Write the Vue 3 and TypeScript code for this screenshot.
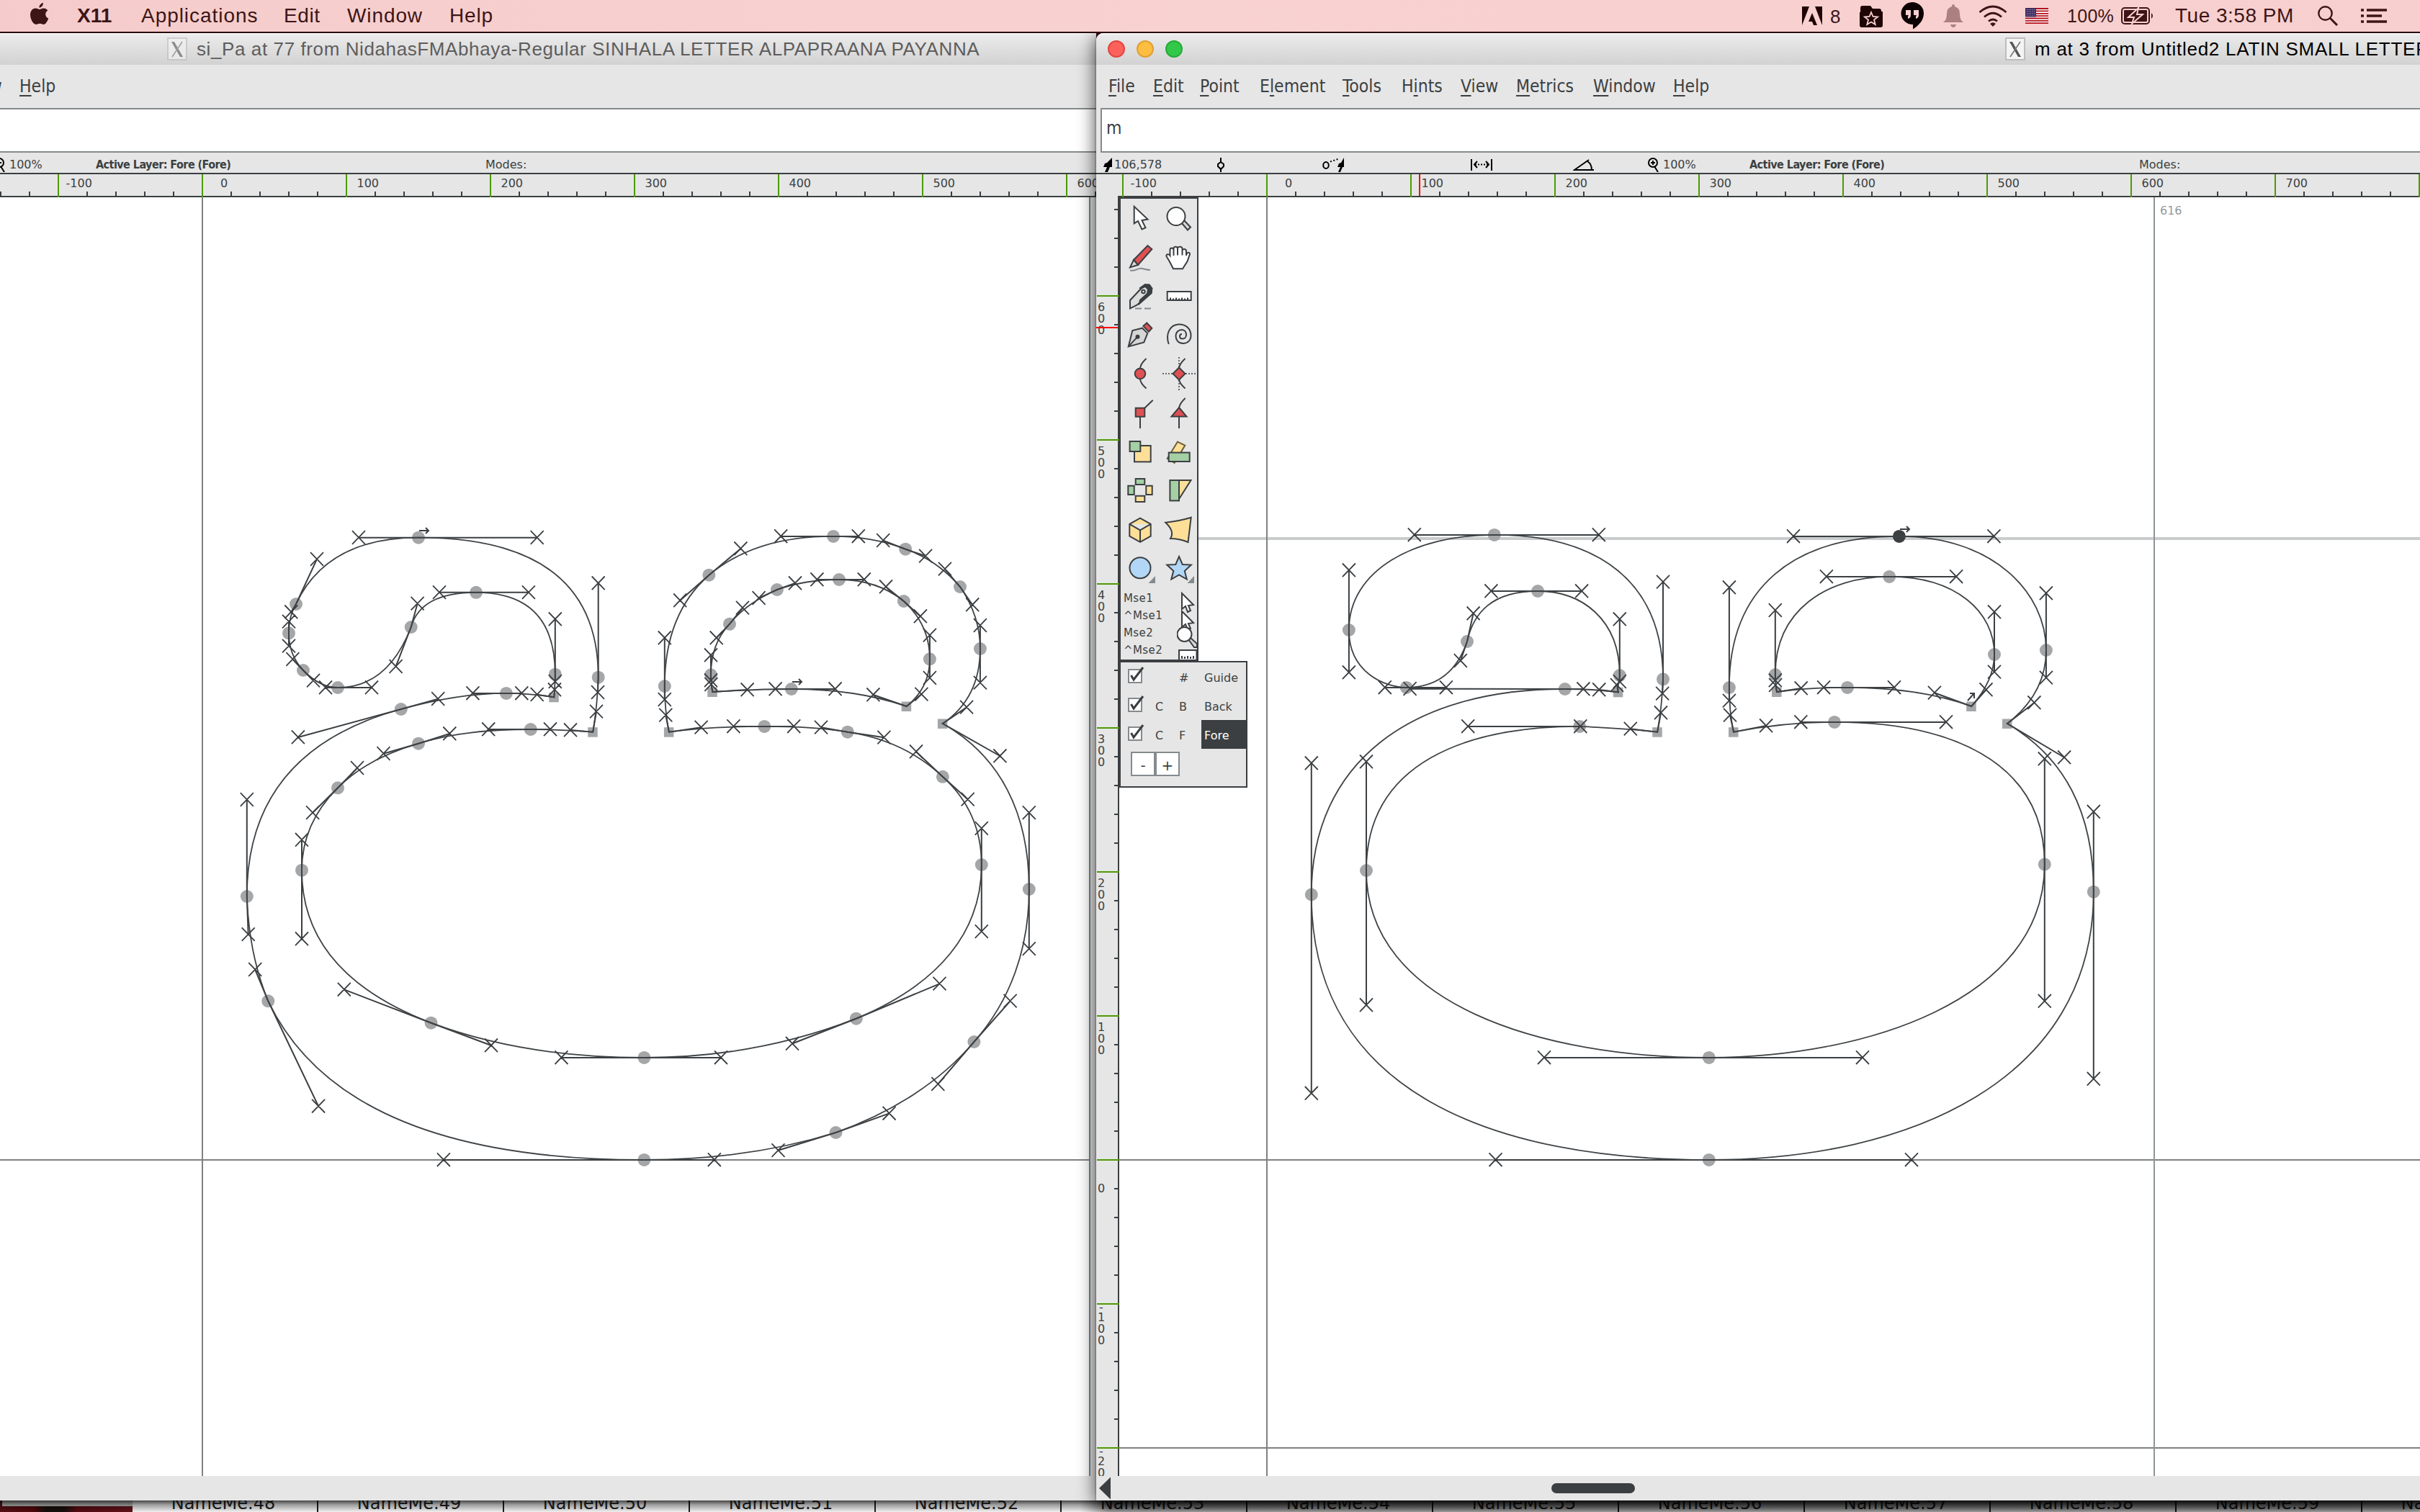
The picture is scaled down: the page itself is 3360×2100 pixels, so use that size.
<script setup lang="ts">
type Kind = 'c' | 's' | 'sel'
// x, y, incoming handle, outgoing handle, kind
type Pt = [number, number, number, number, number, number, Kind]

const bodyA: Pt[] = [
  [581, 746.7, 498, 746.7, 745.7, 746.7, 'c'],
  [830.7, 940.7, 830.7, 810, 830, 961.7, 'c'],
  [823.2, 1016.7, 828, 988.3, 792, 1014, 's'],
  [736.8, 1013, 764, 1013, 678.2, 1013, 'c'],
  [581, 1032.7, 624.3, 1019, 532.5, 1046.7, 'c'],
  [469, 1094.3, 496, 1066.7, 434.1, 1128.8, 'c'],
  [419, 1208.7, 419, 1166.5, 419, 1304, 'c'],
  [598.5, 1420.7, 477.8, 1374.4, 682, 1452, 'c'],
  [894.4, 1468.9, 779.5, 1468.9, 1001, 1468.9, 'c'],
  [1188.8, 1414.7, 1100, 1449.5, 1304.5, 1366.3, 'c'],
  [1362.8, 1201, 1362.8, 1293.8, 1362.8, 1150.6, 'c'],
  [1308.9, 1078.8, 1343.7, 1110.3, 1272, 1044, 'c'],
  [1176.8, 1016.7, 1227.4, 1024.3, 1140, 1010.3, 'c'],
  [1061.3, 1008.9, 1102.2, 1008.9, 1018.4, 1008.9, 'c'],
  [928.9, 1016.7, 973.6, 1010.3, 924.3, 993.3, 's'],
  [922.8, 953, 922.8, 971.7, 922.8, 886, 'c'],
  [984.4, 798.7, 944.2, 834, 1028.4, 762, 'c'],
  [1157, 744.9, 1084.2, 744.9, 1191.8, 744.9, 'c'],
  [1257.2, 762.7, 1226.2, 750.7, 1285.1, 772.3, 'c'],
  [1333, 815, 1311.9, 790.3, 1350.2, 840, 'c'],
  [1360.9, 901, 1360.9, 868.7, 1360.9, 948.3, 'c'],
  [1308.9, 1005, 1342.1, 982.3, 1388.4, 1050, 's'],
  [1428.8, 1235, 1428.8, 1128.8, 1428.8, 1317.8, 'c'],
  [1352.4, 1447, 1402.6, 1390.3, 1302.3, 1505.7, 'c'],
  [1160.5, 1573, 1234.6, 1546.4, 1080.5, 1597.8, 'c'],
  [894.4, 1610.9, 991.8, 1610.9, 615.9, 1610.9, 'c'],
  [372.3, 1390.3, 442.1, 1536.4, 354.2, 1346.7, 'c'],
  [342.8, 1245, 344.7, 1297.8, 342.8, 1110.7, 'c'],
  [556.8, 985, 413.9, 1024, 608.2, 970.7, 'c'],
  [702.9, 962.9, 656.4, 962.9, 724.3, 962.9, 'c'],
  [769.3, 968.3, 745.7, 964.7, 770, 958, 's'],
  [770.8, 936.7, 770.8, 946.7, 770.8, 860, 'c'],
  [661, 822.8, 733.9, 822.8, 610, 822.8, 'c'],
  [570.7, 871, 579.6, 838.3, 549.6, 925.7, 'c'],
  [469, 955, 516, 955, 452, 955, 'c'],
  [421, 931, 435, 945.3, 406.4, 915.7, 'c'],
  [401, 879.3, 401, 897.3, 401, 863.3, 'c'],
  [411, 839, 404.3, 850, 440, 776.7, 'c'],
]
const counterA: Pt[] = [
  [1098.8, 957, 1076.6, 957, 1159.6, 957, 'c'],
  [1258.7, 981, 1212.4, 965, 1279.4, 964.3, 's'],
  [1290.9, 915.3, 1290.9, 941.7, 1290.9, 882.3, 'c'],
  [1254.9, 835, 1277.9, 856, 1230, 815, 'c'],
  [1165, 805, 1199.8, 805, 1134.4, 805, 'c'],
  [1078.9, 819, 1104, 810, 1053.6, 830.7, 'c'],
  [1013, 866.7, 1031, 844.3, 994.7, 886, 'c'],
  [987, 937.3, 987, 910, 987, 945, 'c'],
  [989.3, 961, 987.4, 950.7, 1037.6, 958, 's'],
]
const bodyB: Pt[] = [
  [2074.8, 742.9, 1963.8, 742.9, 2219.8, 742.9, 'c'],
  [2309, 943.3, 2309, 808.3, 2308.2, 963.3, 'c'],
  [2301.2, 1016.7, 2306, 990, 2263.8, 1012.3, 's'],
  [2193.2, 1008.9, 2194.3, 1008.9, 2038.2, 1008.9, 'c'],
  [1897, 1209, 1897, 1058, 1897, 1396, 'c'],
  [2372.8, 1468.9, 2144, 1468.9, 2586, 1468.9, 'c'],
  [2838.8, 1200.5, 2838.8, 1390.5, 2838.8, 1054, 'c'],
  [2547, 1002.9, 2702, 1002.9, 2500.3, 1002.9, 'c'],
  [2407, 1016.7, 2452.1, 1008, 2402, 993.3, 's'],
  [2400.9, 955, 2400.9, 973.3, 2400.9, 816, 'c'],
  [2636.9, 744.9, 2490, 744.9, 2768.4, 744.9, 'sel'],
  [2840.9, 903, 2840.9, 824, 2840.9, 941.3, 'c'],
  [2787, 1005, 2824.4, 976, 2866.1, 1052, 's'],
  [2906.8, 1238.7, 2906.8, 1127.5, 2906.8, 1498.5, 'c'],
  [2372.8, 1610.9, 2654, 1610.9, 2076.5, 1610.9, 'c'],
  [1820.8, 1242.5, 1820.8, 1518.5, 1820.8, 1060, 'c'],
  [2172.8, 957, 1957.6, 956.7, 2198.4, 957, 'c'],
  [2246.8, 961.3, 2220.2, 958, 2245, 951.7, 's'],
  [2248.8, 938, 2248.8, 946.7, 2248.8, 860, 'c'],
  [2135.1, 821, 2196.1, 821, 2070.4, 821, 'c'],
  [2037, 891, 2045.6, 852, 2027.8, 917.7, 'c'],
  [1952.7, 954.9, 2007.9, 954.9, 1922.8, 954.9, 'c'],
  [1872.9, 875, 1872.9, 934, 1872.9, 792, 'c'],
]
const counterB: Pt[] = [
  [2737.2, 981, 2685.9, 962.3, 2757.5, 958, 's'],
  [2769, 909, 2769, 933.3, 2769, 850, 'c'],
  [2623.2, 800.9, 2716.1, 800.9, 2535.9, 800.9, 'c'],
  [2464.8, 937, 2464.8, 847.7, 2464.8, 945, 'c'],
  [2467, 961, 2465.1, 951.7, 2500.7, 956, 's'],
  [2565, 954.9, 2532.1, 954.9, 2630, 954.9, 'c'],
]

const outline = (pts: Pt[]): string => {
  let d = `M${pts[0][0]} ${pts[0][1]}`
  pts.forEach((p, i) => {
    const n = pts[(i + 1) % pts.length]
    d += `C${p[4]} ${p[5]} ${n[2]} ${n[3]} ${n[0]} ${n[1]}`
  })
  return d + 'Z'
}
const handles = (pts: Pt[]): string =>
  pts.map((p) => `M${p[2]} ${p[3]}L${p[0]} ${p[1]}L${p[4]} ${p[5]}`).join('')
const cross = (x: number, y: number): string =>
  `M${x - 9} ${y - 9.5}l18 18.6M${x + 9} ${y - 9.5}l-18 18.6`
const crosses = (pts: Pt[]): string =>
  pts.map((p) => cross(p[2], p[3]) + cross(p[4], p[5])).join('')

const menus = [
  { pre: '', key: 'F', post: 'ile', w: 62 },
  { pre: '', key: 'E', post: 'dit', w: 65 },
  { pre: '', key: 'P', post: 'oint', w: 83 },
  { pre: 'E', key: 'l', post: 'ement', w: 115 },
  { pre: '', key: 'T', post: 'ools', w: 82 },
  { pre: 'H', key: 'i', post: 'nts', w: 82 },
  { pre: '', key: 'V', post: 'iew', w: 77 },
  { pre: '', key: 'M', post: 'etrics', w: 107 },
  { pre: '', key: 'W', post: 'indow', w: 111 },
  { pre: '', key: 'H', post: 'elp', w: 80 },
]

interface Win {
  id: string
  title: string
  entry: string
  coords: string
  left: number
  zero: number
  canvasX: number
  canvasW: number
  contours: Pt[][]
  arrows: string[]
}
const windows: Win[] = [
  {
    id: 'back', title: 'si_Pa at 77 from NidahasFMAbhaya-Regular SINHALA LETTER ALPAPRAANA PAYANNA',
    entry: '', coords: '', left: -774, zero: 281, canvasX: -742, canvasW: 2254,
    contours: [bodyA, counterA],
    arrows: ['M582 737h13m-4-4l4 4l-4 4', 'M1100 947h13m-4-4l4 4l-4 4'],
  },
  {
    id: 'front', title: 'm at 3 from Untitled2 LATIN SMALL LETTER M',
    entry: 'm', coords: '106,578', left: 1522, zero: 1759, canvasX: 1554, canvasW: 1806,
    contours: [bodyB, counterB],
    arrows: ['M2638 735h13m-4-4l4 4l-4 4', 'M2732 973l9-10m-6 0h6v7'],
  },
]

const units = [-1, 0, 1, 2, 3, 4, 5, 6, 7, 8]
const labelX = (zero: number, u: number): number => zero + u * 200 + (u < 0 ? 10.5 : u === 0 ? 25 : 14.5)
const minors = (from: number, to: number, origin: number): number[] => {
  const out: number[] = []
  for (let i = -60; i < 80; i++) {
    const v = origin + i * 40
    if (i % 5 !== 0 && v > from && v < to) out.push(v)
  }
  return out
}
const vUnits = [6, 5, 4, 3, 2, 1, 0, -1, -2]
const vDigits = (u: number): { ch: string; y: number }[] => {
  const y = 1611 - u * 200
  if (u === 0) return [{ ch: '0', y: y + 45 }]
  const txt = String(Math.abs(u) * 100).split('')
  const off = u < 0 ? 24 : 21
  const digits = txt.map((ch, i) => ({ ch, y: y + off + i * 16 }))
  return u < 0 ? [{ ch: '-', y: y + 10 }, ...digits] : digits
}

const layers = [
  { c: '', k: '#', name: 'Guide' },
  { c: 'C', k: 'B', name: 'Back' },
  { c: 'C', k: 'F', name: 'Fore' },
]
const mouse = ['Mse1', '^Mse1', 'Mse2', '^Mse2']
const names = Array.from({ length: 13 }, (_, i) => `NameMe.${48 + i}`)
</script>

<template>
  <div class="desktop">
    <div class="fontview">
      <div class="wall"><i></i></div>
      <div v-for="n in names" :key="n" class="cell"><span>{{ n }}</span></div>
      <div class="shade"></div>
      <div class="shade deep"></div>
    </div>

    <section v-for="w in windows" :key="w.id" class="win" :class="w.id" :style="{ left: w.left + 'px' }">
      <header class="title">
        <div v-if="w.id === 'front'" class="lights"><i class="r"></i><i class="y"></i><i class="g"></i></div>
        <svg class="xicon" width="28" height="32" viewBox="0 0 28 32">
          <rect x="1" y="1" width="26" height="30" fill="#f4f4f4" stroke="#bdbdbd" stroke-width="2" />
          <path d="M6 6h4l12 21h-4z" fill="#555" />
          <path d="M21 6L7 27" stroke="#777" stroke-width="1.6" />
        </svg>
        <span class="ttext">{{ w.title }}</span>
      </header>
      <nav class="menu">
        <span v-for="(m, i) in menus" :key="i" :style="{ width: m.w + 'px' }">{{ m.pre }}<u>{{ m.key }}</u>{{ m.post }}</span>
      </nav>
      <div class="entry">{{ w.entry }}</div>
      <div class="info">
        <div class="seg s1">
          <svg width="14" height="20" viewBox="0 0 14 20"><path d="M13 0v13h-3L7 20H3l3-7H1l2-5 3-1z" fill="#000" /></svg>
          <span>{{ w.coords }}</span>
        </div>
        <div class="seg s2">
          <svg width="18" height="20" viewBox="0 0 18 20"><path d="M9 0v6M9 15v5M9 6l4 3v3l-4 4-4-4V9z" fill="none" stroke="#000" stroke-width="2" /></svg>
        </div>
        <div class="seg s3">
          <svg width="30" height="20" viewBox="0 0 30 20">
            <ellipse cx="5" cy="10.500" rx="3.800" ry="4.500" fill="none" stroke="#000" stroke-width="2" />
            <path d="M11 5.500l12-4" stroke="#000" stroke-width="2" stroke-dasharray="2 2.500" />
            <path d="M30 0v13h-2l-3 7h-3l3-7h-4l2-5 3-1z" fill="#000" />
          </svg>
        </div>
        <div class="seg s4">
          <svg width="30" height="20" viewBox="0 0 30 20"><path d="M1 2v16M29 2v16M9 5L5 9.500l4 4.500M21 5l4 4.500-4 4.500" fill="none" stroke="#000" stroke-width="2" /><path d="M6 9.500h18" stroke="#000" stroke-width="2" stroke-dasharray="2 2" /></svg>
        </div>
        <div class="seg s5">
          <svg width="30" height="20" viewBox="0 0 30 20"><path d="M22 3L2 17h27M20 5c5 3 6 8 6 12" fill="none" stroke="#000" stroke-width="2" /></svg>
        </div>
        <div class="seg s6">
          <svg width="16" height="20" viewBox="0 0 16 20"><circle cx="7" cy="7" r="6" fill="none" stroke="#000" stroke-width="2" /><path d="M7 4v6M4 7h6M9 12l5 8" stroke="#000" stroke-width="2" /></svg>
          <span>100%</span>
        </div>
        <div class="seg s7">Active Layer: Fore (Fore)</div>
        <div class="seg">Modes:</div>
      </div>
      <svg class="hruler" height="34" :width="w.id === 'front' ? 1838 : 2296" :viewBox="`${w.left} 240 ${w.id === 'front' ? 1838 : 2296} 34`">
        <rect :x="w.left" y="240" width="2296" height="2" fill="#3b3f42" />
        <rect :x="w.id === 'front' ? 1552 : w.left" y="272" width="2296" height="2" fill="#3b3f42" />
        <rect v-for="x in minors(w.canvasX, 3360, w.zero)" :key="x" :x="x - 1" y="266" width="2" height="6" fill="#3b3f42" />
        <g v-for="u in units" :key="u">
          <rect :x="w.zero + u * 200 - 1" y="242" width="2" height="32" fill="#4e9a06" />
          <text :x="labelX(w.zero, u)" y="260">{{ u * 100 }}</text>
        </g>
        <rect v-if="w.id === 'front'" x="1970" y="242" width="2" height="30" fill="#f00" />
      </svg>
      <div class="work">
        <svg v-if="w.id === 'front'" class="vruler" width="32" height="1776" viewBox="1522 274 32 1776">
          <rect x="1552" y="274" width="2" height="1776" fill="#3b3f42" />
          <rect v-for="y in minors(274, 2050, 1611)" :key="y" x="1547" :y="y - 1" width="5" height="2" fill="#3b3f42" />
          <g v-for="u in vUnits" :key="u">
            <rect x="1523" :y="1610 - u * 200" width="31" height="2" fill="#4e9a06" />
            <text v-for="(d, i) in vDigits(u)" :key="i" x="1529" :y="d.y" text-anchor="middle">{{ d.ch }}</text>
          </g>
          <rect x="1522" y="454" width="30" height="2" fill="#f00" />
        </svg>
        <div v-else class="vgap"></div>
        <svg class="canvas" :width="w.canvasW" height="1776" :viewBox="`${w.canvasX} 274 ${w.canvasW} 1776`">
          <rect :x="w.canvasX" y="274" :width="w.canvasW" height="1776" fill="#fff" />
          <rect v-if="w.id === 'front'" x="1554" y="746" width="1806" height="4" fill="#c9cccc" />
          <rect :x="w.canvasX" y="1610" :width="w.canvasW" height="2" fill="#808080" />
          <rect :x="w.zero - 1" y="274" width="2" height="1776" fill="#808080" />
          <template v-if="w.id === 'front'">
            <rect x="1554" y="2010" width="1806" height="2" fill="#808080" />
            <rect x="2990" y="274" width="2" height="1776" fill="#8f9496" />
            <text class="adv" x="2999" y="298">616</text>
          </template>
          <g v-for="(c, ci) in w.contours" :key="ci">
            <template v-for="(p, pi) in c" :key="pi">
              <rect v-if="p[6] === 's'" :x="p[0] - 7" :y="p[1] - 6.500" width="13.500" height="13.500" fill="#a5a6a8" />
              <circle v-else :cx="p[0]" :cy="p[1]" r="9" :fill="p[6] === 'sel' ? '#3b3f42' : '#a5a6a8'" />
            </template>
            <path :d="handles(c)" fill="none" stroke="#3b3f42" stroke-width="2" />
            <path :d="outline(c)" fill="none" stroke="#3f4346" stroke-width="1.800" />
            <path :d="crosses(c)" fill="none" stroke="#3b3f42" stroke-width="1.800" />
          </g>
          <path v-for="a in w.arrows" :key="a" :d="a" fill="none" stroke="#3b3f42" stroke-width="2" />
        </svg>
        <div v-if="w.id === 'back'" class="edge"></div>

        <aside v-if="w.id === 'front'" class="palettes">
          <div class="tools">
            <div class="grid">
              <svg viewBox="0 0 54 54"><path class="w" d="M18.700 10.800V34.400L24 31l5.500 11.500 5-2.300L29.500 30l8-1.400z" /></svg>
              <svg viewBox="0 0 54 54"><path d="M30 33l3.500-3.500 9.500 10-4 4z" fill="#d6d6d6" /><circle class="w" cx="23" cy="24.500" r="12.500" /></svg>
              <svg viewBox="0 0 54 54"><path class="r" d="M18 31L37.500 11l5.800 5L24 37.900z" /><path d="M18 31l6 6.900-11 3.500z" fill="#d6d6d6" /><path d="M13 45.500c8 2 10-4 17-2.500 4 1 7 2 11 2" fill="none" stroke="#858a8d" /></svg>
              <svg viewBox="0 0 54 54"><path class="w" d="M19 43.200L14 33.500 9.500 26c-.5-3 3-4 5-1v-8c0-3 4.500-3.500 5 0v-2c.5-3 5-3 5.500 0 .5-3 6-3 6.500 0v3c1-3 5.500-2.500 5.500 1v5c1-4 5-4 5-1l-3.500 10-6.500 10.200zM19.500 17v8M25 15v9.500M31.500 15v9.500M37 18v7" /></svg>
              <svg viewBox="0 0 54 54"><path d="M13 44.500V33L31 14l8-2.500 4 5v6L22 40z" fill="#dcdcdc" /><path d="M27 16l7-5 6 .8 3.500 5-1.500 7-16 14 1-5 10-9 1-6-4-4-6 3z" fill="#3b3f42" /><circle cx="31.500" cy="21" r="2.200" fill="#eee" /><path d="M20 44.600h9m4 0h9" stroke="#858a8d" /></svg>
              <svg viewBox="0 0 54 54"><rect class="w" x="10.700" y="21" width="33" height="12" /><path d="M15 33v-3.500M19 33v-2.500M23 33v-3.500M27 33v-2.500M31 33v-3.500M35 33v-2.500M39 33v-3.500" /></svg>
              <svg viewBox="0 0 54 54"><path d="M10.700 43.400L16.300 21 30 17.700l7.300 7.200-5 12.500z" fill="#d6d6d6" /><path class="r" d="M31.300 14.900l5-4.400 7 7.200-4.300 5z" /><path d="M10.700 43.400l12.600-13.500" /><circle cx="23.500" cy="29.800" r="2" fill="#3b3f42" /></svg>
              <svg viewBox="0 0 54 54"><path fill="none" d="M12.700 40C8 26 14 13 26.500 12.400 37 12 43.500 19 43.500 28c0 7-5 11-11 11-6.500 0-10-5-10-10 0-6 4-9 8.500-9 4 0 6 3.500 6 7 0 3-2 5.500-5 5.500s-4-1.500-4-3.500 1-3 3-3" /></svg>
              <svg viewBox="0 0 54 54"><path fill="none" d="M35.500 6Q27 14 27 20M27 34q0 6 8.500 13.500" /><circle class="r" cx="27" cy="27" r="7.300" /></svg>
              <svg viewBox="0 0 54 54"><path stroke-dasharray="2 2" stroke="#666a6c" d="M4 27h46M27 4v46" /><path fill="none" d="M35.500 6Q27 14 27 20M27 34q0 6 8.500 13.500" /><path class="r" d="M27 18.500l8.500 8.500-8.500 8.500-8.500-8.500z" /></svg>
              <svg viewBox="0 0 54 54"><path d="M33 21L44.700 9.700M27 33v16" /><rect class="r" x="20.700" y="20.700" width="12.600" height="12" /></svg>
              <svg viewBox="0 0 54 54"><path fill="none" d="M27 20q2-7 8.700-13M27 33v16" /><path class="r" d="M27 20l10.500 12.600h-21z" /></svg>
              <svg viewBox="0 0 54 54"><rect class="ye" x="19" y="19" width="22.700" height="22.400" /><rect class="gr" x="12.600" y="13" width="14.700" height="14" /></svg>
              <svg viewBox="0 0 54 54"><path d="M25 13.600l10.300 5-14.600 24.300-10-6.100z" fill="#fddf98" stroke="#6a5d3a" /><rect class="gr" x="12.700" y="28.600" width="29" height="12.400" /></svg>
              <svg viewBox="0 0 54 54"><path class="gr" d="M20.700 11h12.600v8H20.700zM10.300 20.700h8.400V33h-8.400z" /><path class="ye" d="M35.300 20.700h8.400V33h-8.400zM20.700 34.700h12.600V43H20.700z" /></svg>
              <svg viewBox="0 0 54 54"><path class="ye" d="M27 13h16.500L27 39z" /><rect class="gr" x="14.400" y="13" width="12.600" height="28.400" /></svg>
              <svg viewBox="0 0 54 54"><path class="ye" d="M27 11.600l14.700 8.300v16.700L27 44.900l-14.700-8.300V19.900zM12.300 19.900L27 28.400l14.700-8.500M27 28.400v16.500" /></svg>
              <svg viewBox="0 0 54 54"><path class="ye" d="M8.300 17.700q19-2 35.400-7L39.500 45q-12-5-24.500-5 6.500-10-6.700-22.300z" /></svg>
              <svg viewBox="0 0 54 54"><circle class="bl" cx="27" cy="26.800" r="14.500" /><path d="M48 38v10H38.500z" fill="#858a8d" stroke="none" /></svg>
              <svg viewBox="0 0 54 54"><path class="bl" d="M27 11l4.800 11 12 .6-9 8.400 3 11.500L27 36.500 16.300 42.500l3-11.500-9-8.400 12-.6z" /><path d="M48 38v10H38.500z" fill="#858a8d" stroke="none" /></svg>
            </div>
            <div class="mouse">
              <div class="mlabels"><span v-for="m in mouse" :key="m">{{ m }}</span></div>
              <svg class="micons" width="28" height="98" viewBox="1634 818 28 98">
                <path class="w" d="M1641 824v22l5-4 3 8 4-2-3-7 7-1z" />
                <path class="w" d="M1641 849v22l5-4 3 8 4-2-3-7 7-1z" />
                <path d="M1650 888l3-2 9 8v5h-4z" fill="#d6d6d6" />
                <circle class="w" cx="1644.500" cy="881" r="10" />
                <path class="w" d="M1637 903h24.500v14h-24.500zM1641 915v-4M1645 915v-3M1649 915v-4M1653 915v-3M1657 915v-4" />
              </svg>
            </div>
          </div>
          <div class="layers">
            <div v-for="l in layers" :key="l.name" class="row">
              <svg class="chk" width="24" height="26" viewBox="0 0 24 26"><rect x="1" y="5" width="18" height="18" fill="#fff" stroke="#858a8d" stroke-width="2" /><path d="M4.500 13l3.500 6L21 2" fill="none" stroke="#3b3f42" stroke-width="3" /></svg>
              <span class="c">{{ l.c }}</span><span class="k">{{ l.k }}</span>
              <span class="n" :class="{ on: l.name === 'Fore' }">{{ l.name }}</span>
            </div>
            <div class="btns"><span>-</span><span>+</span></div>
          </div>
        </aside>
      </div>
      <footer class="hbar">
        <template v-if="w.id === 'front'">
          <svg width="18" height="34" viewBox="0 0 18 34"><path d="M0 17L16 1.500v31z" fill="#3b3f42" /></svg>
          <i></i>
        </template>
      </footer>
    </section>

    <div class="macbar">
      <svg class="apple" width="28" height="34" viewBox="0 0 28 34"><path d="M19 1c.4 3-2.600 6.800-5.600 6.600C13 4.800 16 1.400 19 1zM14 10c1.300 0 3.200-1.700 5.800-1.600 2 .1 4.200 1.100 5.500 3-4.600 2.800-3.800 9.400 1 11.200C24.700 26.900 22.300 31 19.500 31c-2 0-2.700-1.200-5.200-1.200S11 31 9.200 31C5 31 1 23.500 1 17.600c0-5.700 3.700-9 7.400-9 2.400 0 4.200 1.400 5.600 1.400z" fill="currentColor" /></svg>
      <b>X11</b><span class="m2">Applications</span><span class="m3">Edit</span><span class="m4">Window</span><span class="m5">Help</span>
      <div class="status">
        <svg width="28" height="26" viewBox="0 0 28 26"><path d="M0 0h10L0 26zM18 0h10v26zM14 9l7 17h-5l-2-5h-5z" fill="#1f0406" /></svg>
        <span class="eight">8</span>
        <svg class="folder" width="32" height="30" viewBox="0 0 32 30"><path d="M4 0h11l3 4h9q3 0 3 3v1h2v19q0 3-3 3H3q-3 0-3-3V9h1V3q0-3 3-3z" fill="#1f0406" /><path d="M16 9l2.500 6 6.500.5-5 4 1.700 6.500L16 22.500 10.300 26l1.700-6.500-5-4 6.500-.5z" fill="none" stroke="#f7d0cf" stroke-width="1.800" /></svg>
        <svg class="hang" width="32" height="38" viewBox="0 0 32 38"><path d="M16 0a16 15.500 0 0 1 16 15.500C32 26 24 33 17 37.500V31A16 15.500 0 0 1 16 0z" fill="#0c0102" /><path d="M7 11h7v7q0 4-4 5v-3l1-2H7zM18 11h7v7q0 4-4 5v-3l1-2h-4z" fill="#f7d0cf" /></svg>
        <svg class="bell" width="28" height="32" viewBox="0 0 28 32"><path d="M14 0q2 0 2 3 7 2 7 10 0 9 5 12H0q5-3 5-12 0-8 7-10 0-3 2-3zM10 28h8q-1 4-4 4t-4-4z" fill="#ad8080" /></svg>
        <svg class="wifi" width="40" height="30" viewBox="0 0 40 30"><path d="M1.500 10Q20-6 38.500 10M8 16.500q12-10.500 24 0M14 22.500q6-5 12 0" fill="none" stroke="currentColor" stroke-width="2.800" /><path d="M20 30l-4-4q4-3.500 8 0z" fill="currentColor" /></svg>
        <svg class="flag" width="32" height="22" viewBox="0 0 32 22"><rect width="32" height="22" fill="#fff" /><path d="M0 1h32M0 4.400h32M0 7.800h32M0 11.200h32M0 14.500h32M0 17.900h32M0 21.200h32" stroke="#b3101c" stroke-width="1.800" /><rect width="15" height="12.500" fill="#3b2a5e" /><path d="M2 2.500h12M2 5h12M2 7.500h12M2 10h12" stroke="#c9c0dc" stroke-width="1" stroke-dasharray="1 1.600" /></svg>
        <span class="pct">100%</span>
        <svg class="batt" width="46" height="24" viewBox="0 0 46 24"><rect x="1" y="1" width="38" height="22" rx="4" fill="none" stroke="currentColor" stroke-width="2" /><rect x="4" y="4" width="32" height="16" rx="1" fill="currentColor" /><path d="M42 8q4 4 0 8z" fill="currentColor" /><path d="M24 1L10 14h8l-3 9 15-13h-8z" fill="currentColor" stroke="#f7d0cf" stroke-width="2" /></svg>
        <span class="clock">Tue 3:58 PM</span>
        <svg class="find" width="30" height="28" viewBox="0 0 30 28"><circle cx="10.500" cy="10.500" r="9.200" fill="none" stroke="currentColor" stroke-width="2.400" /><path d="M17.500 17.500L27 27" stroke="currentColor" stroke-width="3" /></svg>
        <svg class="list" width="36" height="20" viewBox="0 0 36 20"><path d="M0 2h4M8 2h28M0 10h4M8 10h21M0 18h4M8 18h28" stroke="currentColor" stroke-width="3.600" /></svg>
      </div>
    </div>
  </div>
</template>

<style>
html, body { margin: 0; overflow: hidden; }
</style>

<style scoped>
.desktop { position: relative; width: 3360px; height: 2100px; overflow: hidden; background: #3c1014; font-family: "DejaVu Sans", sans-serif; color: #3b3f42; }
.macbar { position: absolute; left: 0; top: 0; width: 3360px; height: 46px; box-sizing: border-box; border-bottom: 2px solid #2a090c; background: linear-gradient(90deg, #f5cccb, #f8d2d0 50%, #f7cfce); display: flex; align-items: center; color: #3d1517; font: 28px "Liberation Sans", Arial, sans-serif; white-space: nowrap; }
.apple { margin: -4px 0 0 41px; }
.macbar b { margin-left: 38px; width: 89px; }
.m2 { width: 198px; letter-spacing: 0.95px; }
.m3 { width: 88px; letter-spacing: 0.6px; }
.m4 { width: 142px; letter-spacing: 0.9px; }
.m5 { width: 90px; letter-spacing: 0.8px; }
.status { display: flex; align-items: center; margin-left: auto; margin-right: 46px; }
.eight { margin-left: 11px; width: 41px; padding-top: 2px; font-size: 26px; }
.folder { margin-top: 2px; }
.hang { margin-left: 25px; }
.bell { margin-left: 27px; }
.wifi { margin-left: 21px; }
.flag { margin-left: 25px; }
.pct { margin-left: 26px; width: 75px; font-size: 25px; letter-spacing: 0.3px; }
.clock { margin-left: 29px; width: 198px; letter-spacing: 0.5px; }
.list { margin-left: 30px; }

.win { position: absolute; top: 46px; height: 2038px; background: #e6e6e6; overflow: hidden; display: flex; flex-direction: column; }
.win > * { flex: none; }
.back { width: 2296px; }
.front { width: 1838px; border-radius: 10px 0 0 0; overflow: visible; box-shadow: -1px 0 2px rgba(0,0,0,.25), 0 4px 26px rgba(0,0,0,.75); }
.title { height: 44px; box-sizing: border-box; display: flex; align-items: center; overflow: hidden; background: linear-gradient(#ececec, #d2d2d2); box-shadow: inset 0 2px #f6f6f6; font: 26px "Liberation Sans", Arial, sans-serif; white-space: nowrap; border-radius: 10px 0 0 0; }
.lights { flex: none; display: flex; gap: 16px; margin-left: 16px; width: 104px; margin-right: 1142px; }
.lights i { flex: none; width: 24px; height: 24px; box-sizing: border-box; border-radius: 50%; border: 2px solid; }
.lights .r { background: #fd615c; border-color: #e2463f; }
.lights .y { background: #fdbd40; border-color: #e0a033; }
.lights .g { background: #34c84a; border-color: #24ab36; }
.xicon { flex: none; margin-right: 13px; }
.back .xicon { margin-left: 1006px; opacity: .6; }
.back .ttext { color: #5d5d5d; letter-spacing: 0.6px; }
.front .ttext { color: #000; letter-spacing: 0.75px; }
.ttext { padding-top: 1px; }
.menu { height: 60px; box-sizing: border-box; display: flex; align-items: center; padding: 0 0 2px 17px; font: 24.5px "DejaVu Sans Condensed", "DejaVu Sans", sans-serif; font-stretch: condensed; }
.menu span { white-space: nowrap; }
.menu u { text-decoration-thickness: 2px; text-underline-offset: 4px; text-decoration-skip-ink: none; }
.entry { height: 62px; box-sizing: border-box; margin-left: 6px; border: 2px solid #858a8d; border-right: 0; background: #fff; padding: 0 0 7px 6px; display: flex; align-items: center; font: 24.5px "DejaVu Sans Condensed", "DejaVu Sans", sans-serif; font-stretch: condensed; }
.info { height: 28px; display: flex; align-items: center; padding-left: 9px; font-size: 16px; white-space: nowrap; overflow: hidden; }
.seg { display: flex; align-items: center; height: 28px; padding-top: 5px; box-sizing: border-box; }
.seg svg { margin-top: 1px; flex: none; }
.s1 { width: 155px; gap: 2px; }
.s2 { width: 150px; }
.s3 { width: 206px; }
.s4 { width: 142px; }
.s5 { width: 104px; }
.s6 { width: 141px; gap: 5px; }
.s7 { width: 541px; font-family: "DejaVu Sans Condensed", "DejaVu Sans"; font-stretch: condensed; font-weight: bold; letter-spacing: -0.55px; }
.hruler { display: block; }
.hruler text, .vruler text, .adv { font: 16px "DejaVu Sans", sans-serif; fill: #3b3f42; }
.canvas .adv { fill: #94999b; }
.work { position: relative; display: flex; height: 1776px; }
.work > * { flex: none; }
.vruler, .canvas { display: block; }
.vgap { width: 32px; }
.edge { width: 8px; border-left: 2px solid #7b8388; background: #e6e6e6; }
.hbar { height: 34px; display: flex; align-items: center; padding-left: 4px; background: #e6e6e6; }
.hbar i { width: 116px; height: 14px; border-radius: 7px; background: #3b3f42; margin-left: 610px; }

.palettes { position: absolute; left: 32px; top: 0; }
.tools { width: 110px; height: 644px; box-sizing: border-box; border: 2px solid #3b3f42; background: #e6e6e6; overflow: hidden; }
.grid { display: grid; grid-template-columns: 54px 54px; grid-auto-rows: 54px; }
.grid svg { width: 54px; height: 54px; display: block; }
.grid svg, .micons { stroke: #3b3f42; stroke-width: 2; }
.w { fill: #fff; }
.r { fill: #e05052; }
.ye { fill: #fedf98; }
.gr { fill: #a5cfa4; }
.bl { fill: #b2d6f6; }
.mouse { display: flex; justify-content: space-between; height: 100px; padding-left: 4px; }
.mlabels { padding-top: 3px; display: flex; flex-direction: column; font-size: 15px; letter-spacing: 0.4px; }
.mlabels span { height: 24px; line-height: 24px; }
.micons { margin-top: 2px; flex: none; }
.layers { width: 178px; height: 176px; box-sizing: border-box; border: 2px solid #3b3f42; background: #e6e6e6; }
.row { display: flex; height: 40px; align-items: center; padding-left: 10px; font-size: 16px; }
.chk { margin-top: -5px; flex: none; }
.row span { height: 40px; line-height: 44px; }
.c { margin-left: 14px; width: 33px; }
.k { width: 31px; }
.n { flex: 1; padding-left: 4px; }
.n.on { background: #3b3f42; color: #fff; }
.btns { display: flex; padding: 4px 0 0 14px; }
.btns span { width: 34px; height: 34px; box-sizing: border-box; border: 2px solid #858a8d; background: #fff; text-align: center; font-size: 20px; line-height: 34px; }

.fontview { position: absolute; left: 0; top: 2084px; width: 3360px; height: 16px; display: flex; overflow: hidden; background: #fff; }
.wall { flex: none; width: 184px; height: 16px; background: linear-gradient(90deg, #5e1216, #54090d 25%, #17100c 35%, #17100c 48%, #5a0c12 58%, #67141b); }
.wall i { display: block; height: 8px; margin-left: 3px; background: #c9cbc8; }
.cell { flex: none; width: 258px; height: 16px; box-sizing: border-box; border-right: 2px solid #222; overflow: hidden; text-align: center; color: #222; font-size: 24px; padding-right: 4px; }
.cell span { display: block; line-height: 28px; margin-top: -10px; }
.shade { position: absolute; left: 0; top: 0; width: 3360px; height: 16px; background: linear-gradient(rgba(0,0,0,.72), rgba(0,0,0,.4) 35%, rgba(0,0,0,.06)); }
.deep { left: 1500px; width: 1860px; background: linear-gradient(rgba(0,0,0,.6), rgba(0,0,0,.25)); -webkit-mask-image: linear-gradient(90deg, transparent, #000 40px); mask-image: linear-gradient(90deg, transparent, #000 40px); }
</style>
